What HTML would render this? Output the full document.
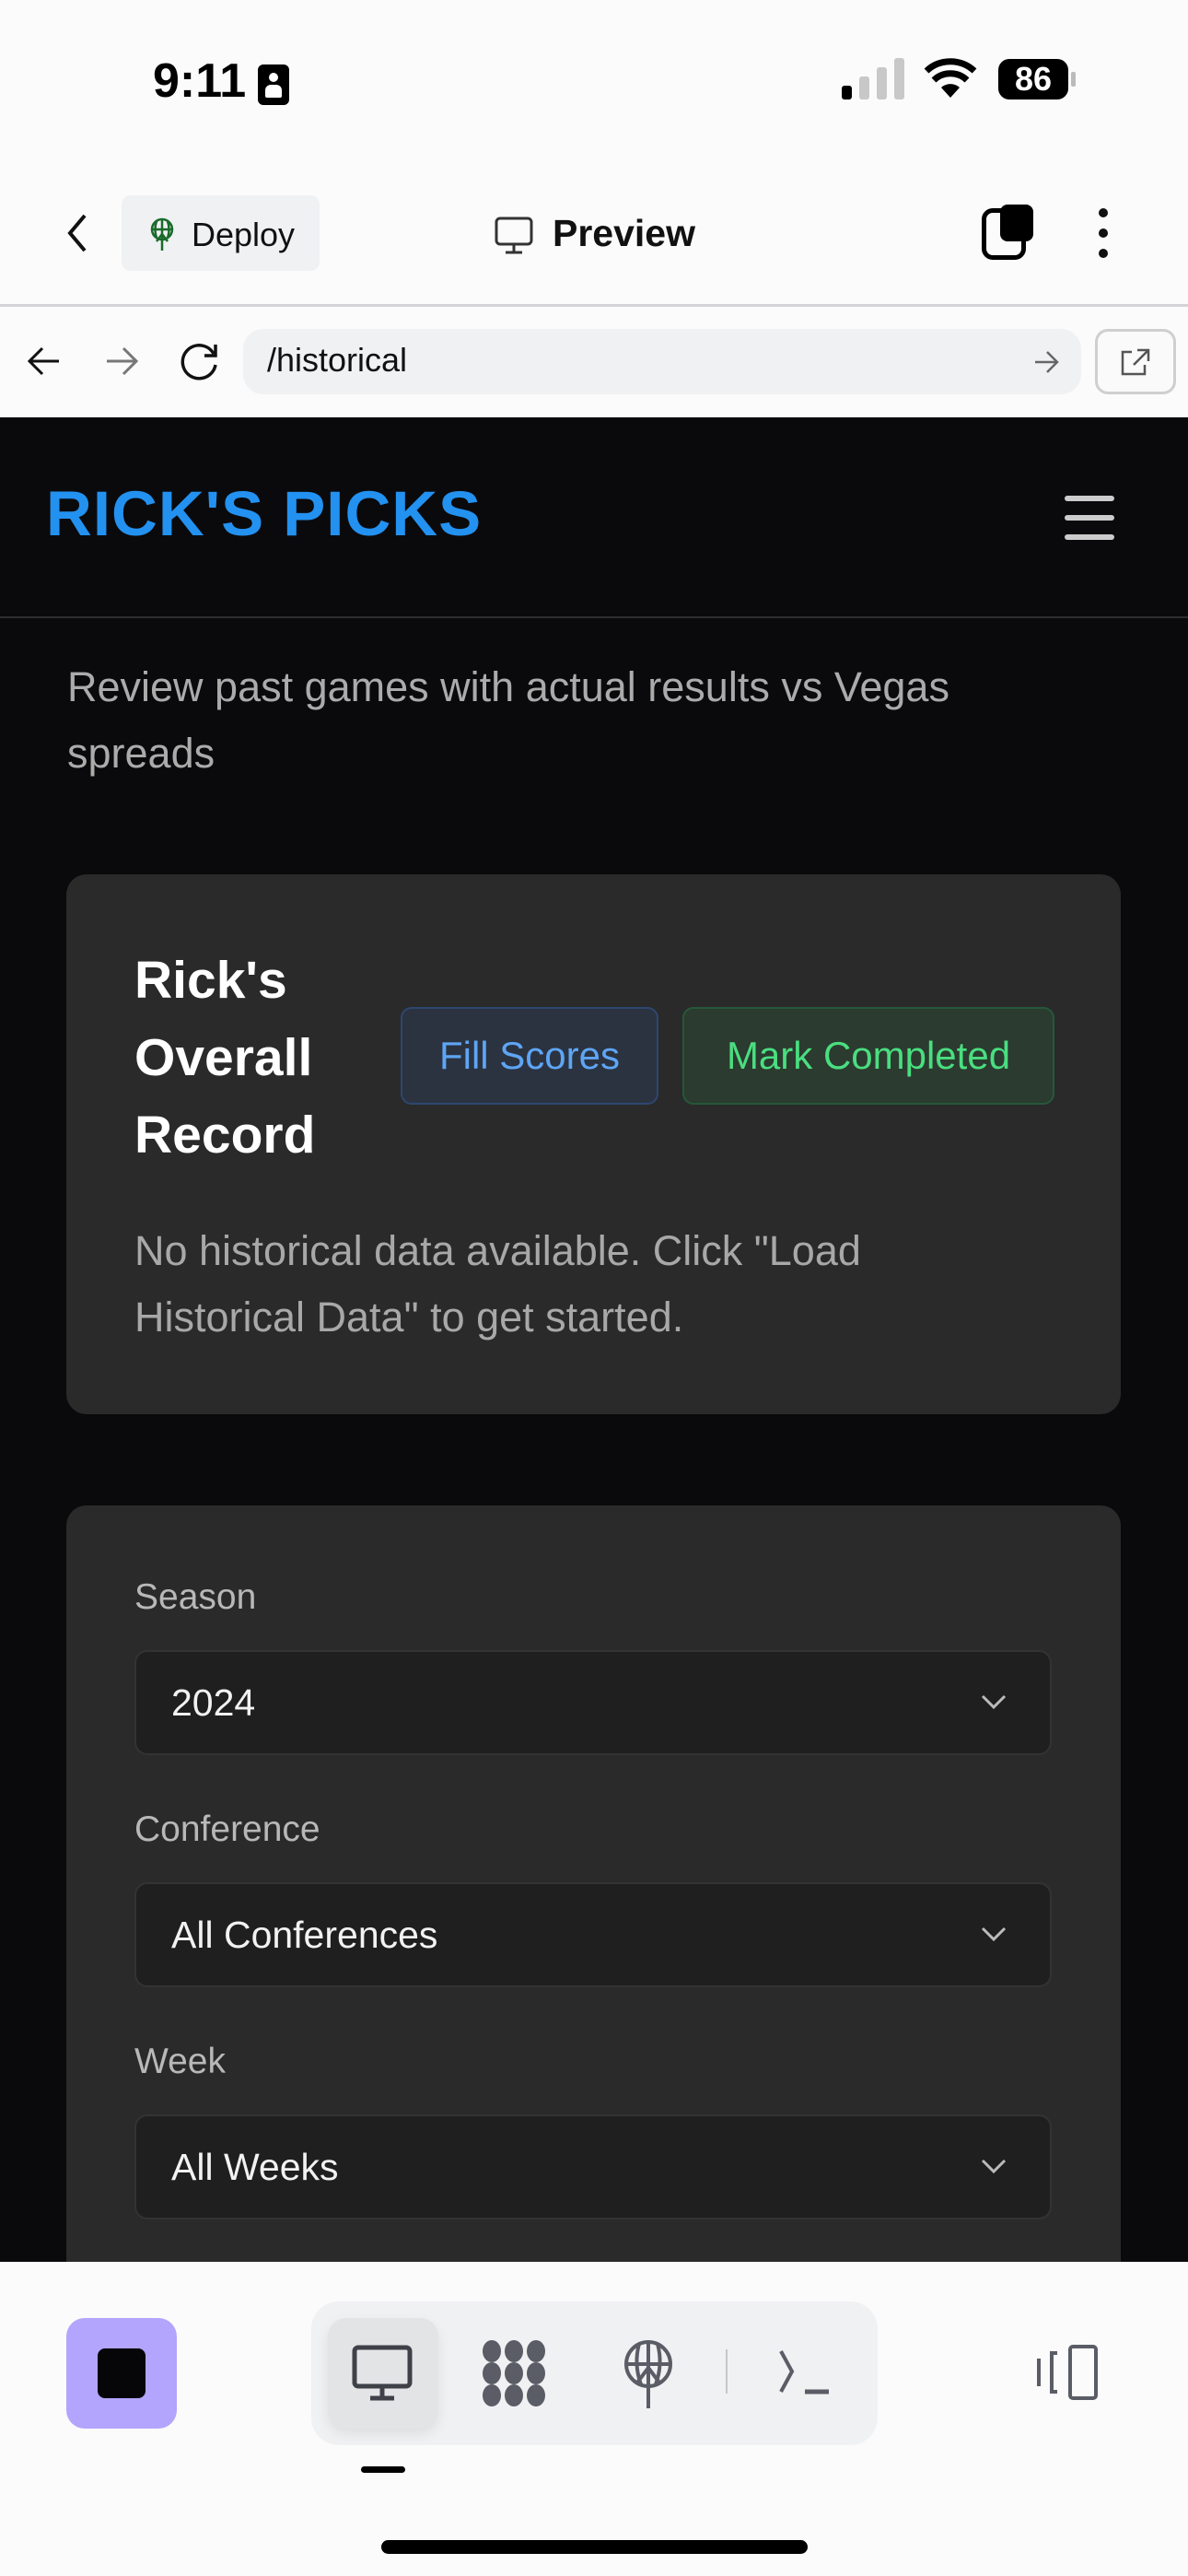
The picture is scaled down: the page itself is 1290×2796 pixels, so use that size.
<!DOCTYPE html>
<html><head><meta charset="utf-8"><style>
*{box-sizing:border-box;margin:0;padding:0}
body{width:1290px;height:2796px;overflow:hidden;background:#fbfbfb;font-family:"Liberation Sans",sans-serif;position:relative}
.a{position:absolute}
.dark{position:absolute;left:0;top:453px;width:1290px;height:2002px;background:#0a0a0c}
.card{position:absolute;background:#2a2a2a;border-radius:22px}
.sel{position:absolute;left:146px;width:996px;height:114px;background:#1f1f1f;border:2px solid #333;border-radius:14px;color:#f2f2f2;font-size:41px;line-height:110px;padding-left:38px}
.lbl{position:absolute;left:146px;color:#b8b8b8;font-size:39px}
.chev{position:absolute;right:46px;top:44px}
</style></head><body>
<!-- status bar -->
<div class="a" style="left:166px;top:58px;font-size:52px;font-weight:bold;color:#000">9:11</div>
<div class="a" style="left:280px;top:70px;width:34px;height:44px;background:#000;border-radius:6px"><div class="a" style="left:12px;top:9px;width:10px;height:10px;border-radius:5px;background:#fff"></div><div class="a" style="left:8px;top:22px;width:18px;height:14px;border-radius:6px 6px 2px 2px;background:#fff"></div></div>
<div class="a" style="left:914px;top:93px;width:11px;height:15px;background:#000;border-radius:3px"></div>
<div class="a" style="left:933px;top:83px;width:11px;height:25px;background:#c8c8c8;border-radius:3px"></div>
<div class="a" style="left:952px;top:73px;width:11px;height:35px;background:#c8c8c8;border-radius:3px"></div>
<div class="a" style="left:971px;top:63px;width:11px;height:45px;background:#c8c8c8;border-radius:3px"></div>
<svg class="a" style="left:1002px;top:62px" width="60" height="46" viewBox="0 0 60 46"><path d="M30 44 L20 33 A15 15 0 0 1 40 33 Z" fill="#000"/><path d="M12 25 A26 26 0 0 1 48 25" stroke="#000" stroke-width="7" fill="none"/><path d="M4 15 A38 38 0 0 1 56 15" stroke="#000" stroke-width="7" fill="none"/></svg>
<div class="a" style="left:1084px;top:64px;width:76px;height:44px;background:#000;border-radius:12px;color:#fff;font-weight:bold;font-size:36px;text-align:center;line-height:44px">86</div>
<div class="a" style="left:1163px;top:78px;width:5px;height:16px;background:#bbb;border-radius:2px"></div>
<!-- toolbar -->
<svg class="a" style="left:68px;top:230px" width="30" height="46"><path d="M24 4 L8 23 L24 42" stroke="#111" stroke-width="4" fill="none"/></svg>
<div class="a" style="left:132px;top:212px;width:215px;height:82px;background:#f0f1f3;border-radius:10px"></div>
<svg class="a" style="left:160px;top:235px" width="32" height="38" viewBox="0 0 32 38"><g stroke="#1a6b2a" stroke-width="2.5" fill="none"><circle cx="16" cy="14" r="11"/><path d="M5 14h22M16 3v34M10 5q-3 9 0 18M22 5q3 9 0 18M10 27l6-8 6 8"/></g></svg>
<div class="a" style="left:208px;top:234px;font-size:36px;color:#111">Deploy</div>
<svg class="a" style="left:536px;top:234px" width="44" height="44" viewBox="0 0 44 44"><rect x="3" y="3" width="38" height="28" rx="4" stroke="#333" stroke-width="3" fill="none"/><path d="M22 31v8M13 40h18" stroke="#333" stroke-width="3"/></svg>
<div class="a" style="left:600px;top:230px;font-size:41px;font-weight:bold;color:#111">Preview</div>
<div class="a" style="left:1066px;top:226px;width:48px;height:56px;border:5px solid #000;border-radius:12px"></div>
<div class="a" style="left:1086px;top:222px;width:36px;height:40px;background:#000;border-radius:8px"></div>
<div class="a" style="left:1193px;top:226px;width:10px;height:10px;border-radius:5px;background:#111"></div>
<div class="a" style="left:1193px;top:248px;width:10px;height:10px;border-radius:5px;background:#111"></div>
<div class="a" style="left:1193px;top:270px;width:10px;height:10px;border-radius:5px;background:#111"></div>
<div class="a" style="left:0;top:330px;width:1290px;height:3px;background:#d4d4d6"></div>
<!-- url row -->
<svg class="a" style="left:28px;top:374px" width="40" height="36"><path d="M36 18H4M18 4L4 18l14 14" stroke="#111" stroke-width="3" fill="none"/></svg>
<svg class="a" style="left:112px;top:374px" width="40" height="36"><path d="M4 18h32M22 4l14 14-14 14" stroke="#777" stroke-width="3" fill="none"/></svg>
<svg class="a" style="left:194px;top:370px" width="46" height="46"><path d="M38 14A18 18 0 1 0 40 26" stroke="#111" stroke-width="3.5" fill="none"/><path d="M40 4v12H28" stroke="#111" stroke-width="3.5" fill="none"/></svg>
<div class="a" style="left:264px;top:357px;width:910px;height:71px;background:#f0f1f3;border-radius:22px"></div>
<div class="a" style="left:290px;top:370px;font-size:36px;color:#111">/historical</div>
<svg class="a" style="left:1122px;top:380px" width="28" height="26"><path d="M2 13h24M15 2l11 11-11 11" stroke="#666" stroke-width="2.5" fill="none"/></svg>
<div class="a" style="left:1189px;top:357px;width:88px;height:71px;border:3px solid #cfcfd1;border-radius:14px;background:#fafafa"></div>
<svg class="a" style="left:1215px;top:376px" width="36" height="34"><path d="M14 6H4v24h24V20M20 4h12v12M32 4L16 20" stroke="#555" stroke-width="2.5" fill="none"/></svg>
<!-- dark page -->
<div class="dark"></div>
<div class="a" style="left:50px;top:518px;font-size:69px;font-weight:bold;color:#2391f0;letter-spacing:1px">RICK'S PICKS</div>
<div class="a" style="left:1156px;top:538px;width:54px;height:6px;background:#ccc;border-radius:3px"></div>
<div class="a" style="left:1156px;top:559px;width:54px;height:6px;background:#ccc;border-radius:3px"></div>
<div class="a" style="left:1156px;top:580px;width:54px;height:6px;background:#ccc;border-radius:3px"></div>
<div class="a" style="left:0;top:669px;width:1290px;height:2px;background:#2e2e30"></div>
<div class="a" style="left:73px;top:710px;width:1080px;font-size:45px;line-height:72px;color:#ababab">Review past games with actual results vs Vegas spreads</div>
<!-- card 1 -->
<div class="card" style="left:72px;top:949px;width:1145px;height:586px"></div>
<div class="a" style="left:146px;top:1022px;font-size:57px;font-weight:bold;line-height:84px;color:#fff;width:240px">Rick's Overall Record</div>
<div class="a" style="left:435px;top:1093px;width:280px;height:106px;background:#2b3340;border:2px solid #2d4770;border-radius:12px;color:#5ea5f5;font-size:42px;text-align:center;line-height:102px">Fill Scores</div>
<div class="a" style="left:741px;top:1093px;width:404px;height:106px;background:#2b3b2f;border:2px solid #25583a;border-radius:12px;color:#4ade80;font-size:42px;text-align:center;line-height:102px">Mark Completed</div>
<div class="a" style="left:146px;top:1322px;width:900px;font-size:45px;line-height:72px;color:#a8a8a8">No historical data available. Click "Load Historical Data" to get started.</div>
<!-- card 2 -->
<div class="card" style="left:72px;top:1634px;width:1145px;height:900px"></div>
<div class="lbl" style="top:1712px">Season</div>
<div class="sel" style="top:1791px">2024<svg class="chev" width="30" height="20"><path d="M3 4l12 12 12-12" stroke="#bbb" stroke-width="3" fill="none"/></svg></div>
<div class="lbl" style="top:1964px">Conference</div>
<div class="sel" style="top:2043px">All Conferences<svg class="chev" width="30" height="20"><path d="M3 4l12 12 12-12" stroke="#bbb" stroke-width="3" fill="none"/></svg></div>
<div class="lbl" style="top:2216px">Week</div>
<div class="sel" style="top:2295px">All Weeks<svg class="chev" width="30" height="20"><path d="M3 4l12 12 12-12" stroke="#bbb" stroke-width="3" fill="none"/></svg></div>
<!-- bottom bar -->
<div class="a" style="left:0;top:2455px;width:1290px;height:341px;background:#fbfbfb"></div>
<div class="a" style="left:72px;top:2516px;width:120px;height:120px;background:#b3a4fd;border-radius:20px"></div>
<div class="a" style="left:106px;top:2549px;width:52px;height:54px;background:#060608;border-radius:8px"></div>
<div class="a" style="left:338px;top:2498px;width:615px;height:156px;background:#f0f1f3;border-radius:30px"></div>
<div class="a" style="left:356px;top:2516px;width:120px;height:120px;background:#e3e4e6;border-radius:20px;box-shadow:0 6px 14px rgba(0,0,0,0.08)"></div>
<svg class="a" style="left:380px;top:2544px" width="70" height="64" viewBox="0 0 70 64"><rect x="5" y="4" width="60" height="42" rx="4" stroke="#3f4148" stroke-width="5" fill="none"/><path d="M35 46v12M22 59h26" stroke="#3f4148" stroke-width="5"/></svg>
<svg class="a" style="left:520px;top:2538px" width="76" height="76" viewBox="0 0 76 76"><g fill="#5a5d66"><ellipse cx="14" cy="14" rx="10" ry="12"/><ellipse cx="38" cy="14" rx="10" ry="12"/><ellipse cx="62" cy="14" rx="10" ry="12"/><ellipse cx="14" cy="38" rx="10" ry="12"/><ellipse cx="38" cy="38" rx="10" ry="12"/><ellipse cx="62" cy="38" rx="10" ry="12"/><ellipse cx="14" cy="62" rx="10" ry="12"/><ellipse cx="38" cy="62" rx="10" ry="12"/><ellipse cx="62" cy="62" rx="10" ry="12"/></g></svg>
<svg class="a" style="left:672px;top:2538px" width="64" height="76" viewBox="0 0 64 76"><g stroke="#5a5d66" stroke-width="4" fill="none"><circle cx="32" cy="28" r="24"/><path d="M8 28h48M32 4v72M22 6q-6 22 2 44M42 6q6 22-2 44M20 48l12-16 12 16"/></g></svg>
<div class="a" style="left:788px;top:2550px;width:2px;height:48px;background:#c6c6c8"></div>
<svg class="a" style="left:840px;top:2550px" width="64" height="52"><path d="M8 2l12 22-12 22" stroke="#5a5d66" stroke-width="4" fill="none"/><path d="M34 46h26" stroke="#5a5d66" stroke-width="5"/></svg>
<svg class="a" style="left:1122px;top:2544px" width="74" height="62" viewBox="0 0 74 62"><g stroke="#5a5d66" stroke-width="4" fill="none"><rect x="40" y="3" width="28" height="56" rx="3"/><path d="M26 10h-6v42h6M6 16v30"/></g></svg>
<div class="a" style="left:392px;top:2677px;width:48px;height:7px;background:#000;border-radius:4px"></div>
<div class="a" style="left:414px;top:2757px;width:463px;height:15px;background:#000;border-radius:8px"></div>
</body></html>
